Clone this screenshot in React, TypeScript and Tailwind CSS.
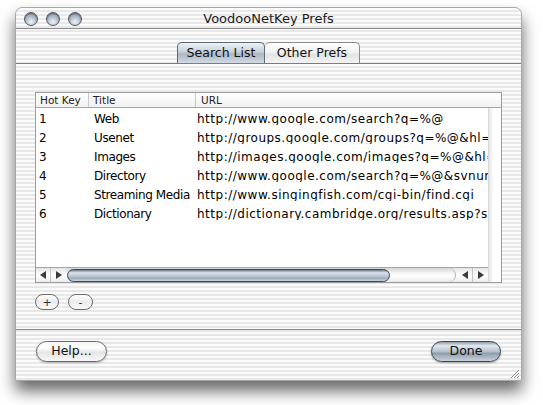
import React from "react";

const stripes =
  "bg-[repeating-linear-gradient(180deg,#fbfbfb_0px,#fbfbfb_2px,#e8e8e8_2px,#e8e8e8_4px)]";

// only the part of each URL that the narrow column shows
const rows = [
  { key: "1", title: "Web", url: "http://www.google.com/search?q=%@" },
  { key: "2", title: "Usenet", url: "http://groups.google.com/groups?q=%@&hl=" },
  { key: "3", title: "Images", url: "http://images.google.com/images?q=%@&hl=" },
  { key: "4", title: "Directory", url: "http://www.google.com/search?q=%@&svnum" },
  { key: "5", title: "Streaming Media", url: "http://www.singingfish.com/cgi-bin/find.cgi" },
  { key: "6", title: "Dictionary", url: "http://dictionary.cambridge.org/results.asp?s" },
];

function Light() {
  return (
    <span className="block w-[14px] h-[14px] rounded-full border border-[#4f5964] bg-[radial-gradient(circle_at_50%_75%,#f2f6fa_0%,#b7c1cc_45%,#7a8591_100%)] shadow-[inset_0_1px_1px_rgba(0,0,0,0.35)]" />
  );
}

function Arrow({ dir }: { dir: "l" | "r" }) {
  return (
    <div className="w-[15px] h-full flex items-center justify-center border-r border-[#c4c4c4] last:border-r-0">
      <svg width="7" height="8" viewBox="0 0 7 8">
        {dir === "l" ? (
          <path d="M6 0 L0 4 L6 8 Z" fill="#3a3a3a" />
        ) : (
          <path d="M1 0 L7 4 L1 8 Z" fill="#3a3a3a" />
        )}
      </svg>
    </div>
  );
}

export default function App() {
  return (
    <div className="w-[543px] h-[405px] bg-white pl-[15px] pt-[7px] font-['DejaVu_Sans',sans-serif] text-black">
      <div className={`w-[507px] h-[374px] rounded-t-[7px] border border-[#a8a8a8] ${stripes} shadow-[0_10px_16px_rgba(0,0,0,0.6)] flex flex-col overflow-hidden`}>
        {/* title bar */}
        <div className="h-[21px] grid grid-cols-[1fr_auto_1fr] items-center border-b border-[#8c8c8c] shrink-0">
          <div className="flex items-center gap-[8px] pl-[8px] pt-[1px]">
            <Light />
            <Light />
            <Light />
          </div>
          <div className="text-[13px] leading-none text-[#1a1a1a]">VoodooNetKey Prefs</div>
          <div />
        </div>

        {/* tabs */}
        <div className="h-[35px] flex items-end justify-center border-b border-[#7c7c7c] shrink-0">
          <div className="h-[21px] w-[88px] flex items-center justify-center rounded-t-[5px] border border-b-0 border-[#5d6a78] bg-[linear-gradient(180deg,#eef2f6_0%,#c7d0da_45%,#aab6c3_55%,#d3dbe3_100%)] text-[12.5px] leading-none text-[#111]">
            Search List
          </div>
          <div className="h-[21px] w-[95px] flex items-center justify-center rounded-t-[5px] border border-b-0 border-l-0 border-[#8a8a8a] bg-[linear-gradient(180deg,#ffffff_0%,#f0f0f0_50%,#e2e2e2_55%,#f4f4f4_100%)] text-[12.5px] leading-none text-[#111]">
            Other Prefs
          </div>
        </div>

        {/* content */}
        <div className="flex-1 flex flex-col pt-[28px] px-[19px] border-b border-[#8a8a8a]">
          <div className="h-[191px] border border-[#9c9c9c] flex flex-col bg-white">
            {/* header */}
            <div className="h-[15px] flex border-b border-[#a4a4a4] text-[10.5px] leading-none text-[#222] bg-[linear-gradient(180deg,#ffffff,#f1f1f1)] shrink-0">
              <div className="w-[53px] pl-[4px] flex items-center border-r border-[#c8c8c8]">Hot Key</div>
              <div className="w-[107px] pl-[4px] flex items-center border-r border-[#c8c8c8]">Title</div>
              <div className="flex-1 pl-[5px] flex items-center">URL</div>
            </div>
            {/* body */}
            <div className="flex-1 flex">
              <div className="w-[452px] flex flex-col overflow-hidden">
                <div className="flex-1 pt-[1px] overflow-hidden">
                  {rows.map((r) => (
                    <div key={r.key} className="h-[19px] flex items-center text-[12px] leading-none whitespace-nowrap">
                      <div className="w-[53px] pl-[3px] shrink-0">{r.key}</div>
                      <div className="w-[107px] pl-[5px] shrink-0 tracking-[-0.4px]">{r.title}</div>
                      <div className="flex-1 pl-[1px] overflow-hidden tracking-[0.5px]">{r.url}</div>
                    </div>
                  ))}
                </div>
                {/* horizontal scrollbar */}
                <div className="h-[15px] flex items-center border-t border-[#a6a6a6] bg-[linear-gradient(180deg,#e4e4e4,#ffffff_50%,#ececec)] shrink-0">
                  <div className="flex h-full">
                    <Arrow dir="l" />
                    <Arrow dir="r" />
                  </div>
                  <div className="flex-1 h-full flex items-center pl-[1px] pr-[1px] rounded-r-[7px] bg-[linear-gradient(180deg,#d6d6d6,#f8f8f8_40%,#ffffff_60%,#e6e6e6)] border-r border-[#b0b0b0]">
                    <div className="w-[323px] h-[13px] rounded-full border border-[#3b4856] bg-[linear-gradient(180deg,#6c7a89_0%,#dbe3eb_25%,#bcc8d4_55%,#9eabba_75%,#c8d2dc_100%)]" />
                  </div>
                  <div className="flex h-full pl-[2px]">
                    <Arrow dir="l" />
                    <Arrow dir="r" />
                  </div>
                </div>
              </div>
              <div className="flex-1 border-l border-[#d8d8d8] bg-[linear-gradient(90deg,#e6e6e6,#ffffff_40%)]" />
            </div>
          </div>

          {/* add / remove */}
          <div className="flex gap-[9px] mt-[11px]">
            <button className="w-[24px] h-[16px] rounded-[8px] border border-[#6d6d6d] bg-[linear-gradient(180deg,#ffffff,#ececec_50%,#f8f8f8)] text-[11px] leading-none text-[#333] flex items-center justify-center">
              +
            </button>
            <button className="w-[25px] h-[16px] rounded-[8px] border border-[#6d6d6d] bg-[linear-gradient(180deg,#ffffff,#ececec_50%,#f8f8f8)] text-[11px] leading-none text-[#333] flex items-center justify-center">
              -
            </button>
          </div>
        </div>

        {/* bottom buttons */}
        <div className="h-[50px] shrink-0 flex items-start justify-between pt-[11px] pl-[20px] pr-[20px] relative">
          <button className="w-[71px] h-[21px] rounded-full border border-[#6a6a6a] bg-[linear-gradient(180deg,#f4f4f4,#ffffff_30%,#e6e6e6_55%,#f7f7f7)] shadow-[0_1px_2px_rgba(0,0,0,0.25)] text-[12.5px] leading-none text-[#111] flex items-center justify-center">
            Help...
          </button>
          <button className="w-[70px] h-[21px] rounded-full border border-[#3a4654] bg-[linear-gradient(180deg,#8e9baa_0%,#e3e9ef_20%,#b4c0cc_50%,#8f9dad_60%,#c9d3dd_100%)] shadow-[0_1px_2px_rgba(0,0,0,0.3)] text-[12.5px] leading-none text-[#111] flex items-center justify-center">
            Done
          </button>
          <svg className="absolute right-[1px] bottom-[1px]" width="12" height="12" viewBox="0 0 12 12">
            <path d="M11 3 L3 11 M11 6 L6 11 M11 9 L9 11" stroke="#8a8a8a" strokeWidth="1" />
            <path d="M11 4 L4 11 M11 7 L7 11 M11 10 L10 11" stroke="#ffffff" strokeWidth="1" />
          </svg>
        </div>
      </div>
    </div>
  );
}
